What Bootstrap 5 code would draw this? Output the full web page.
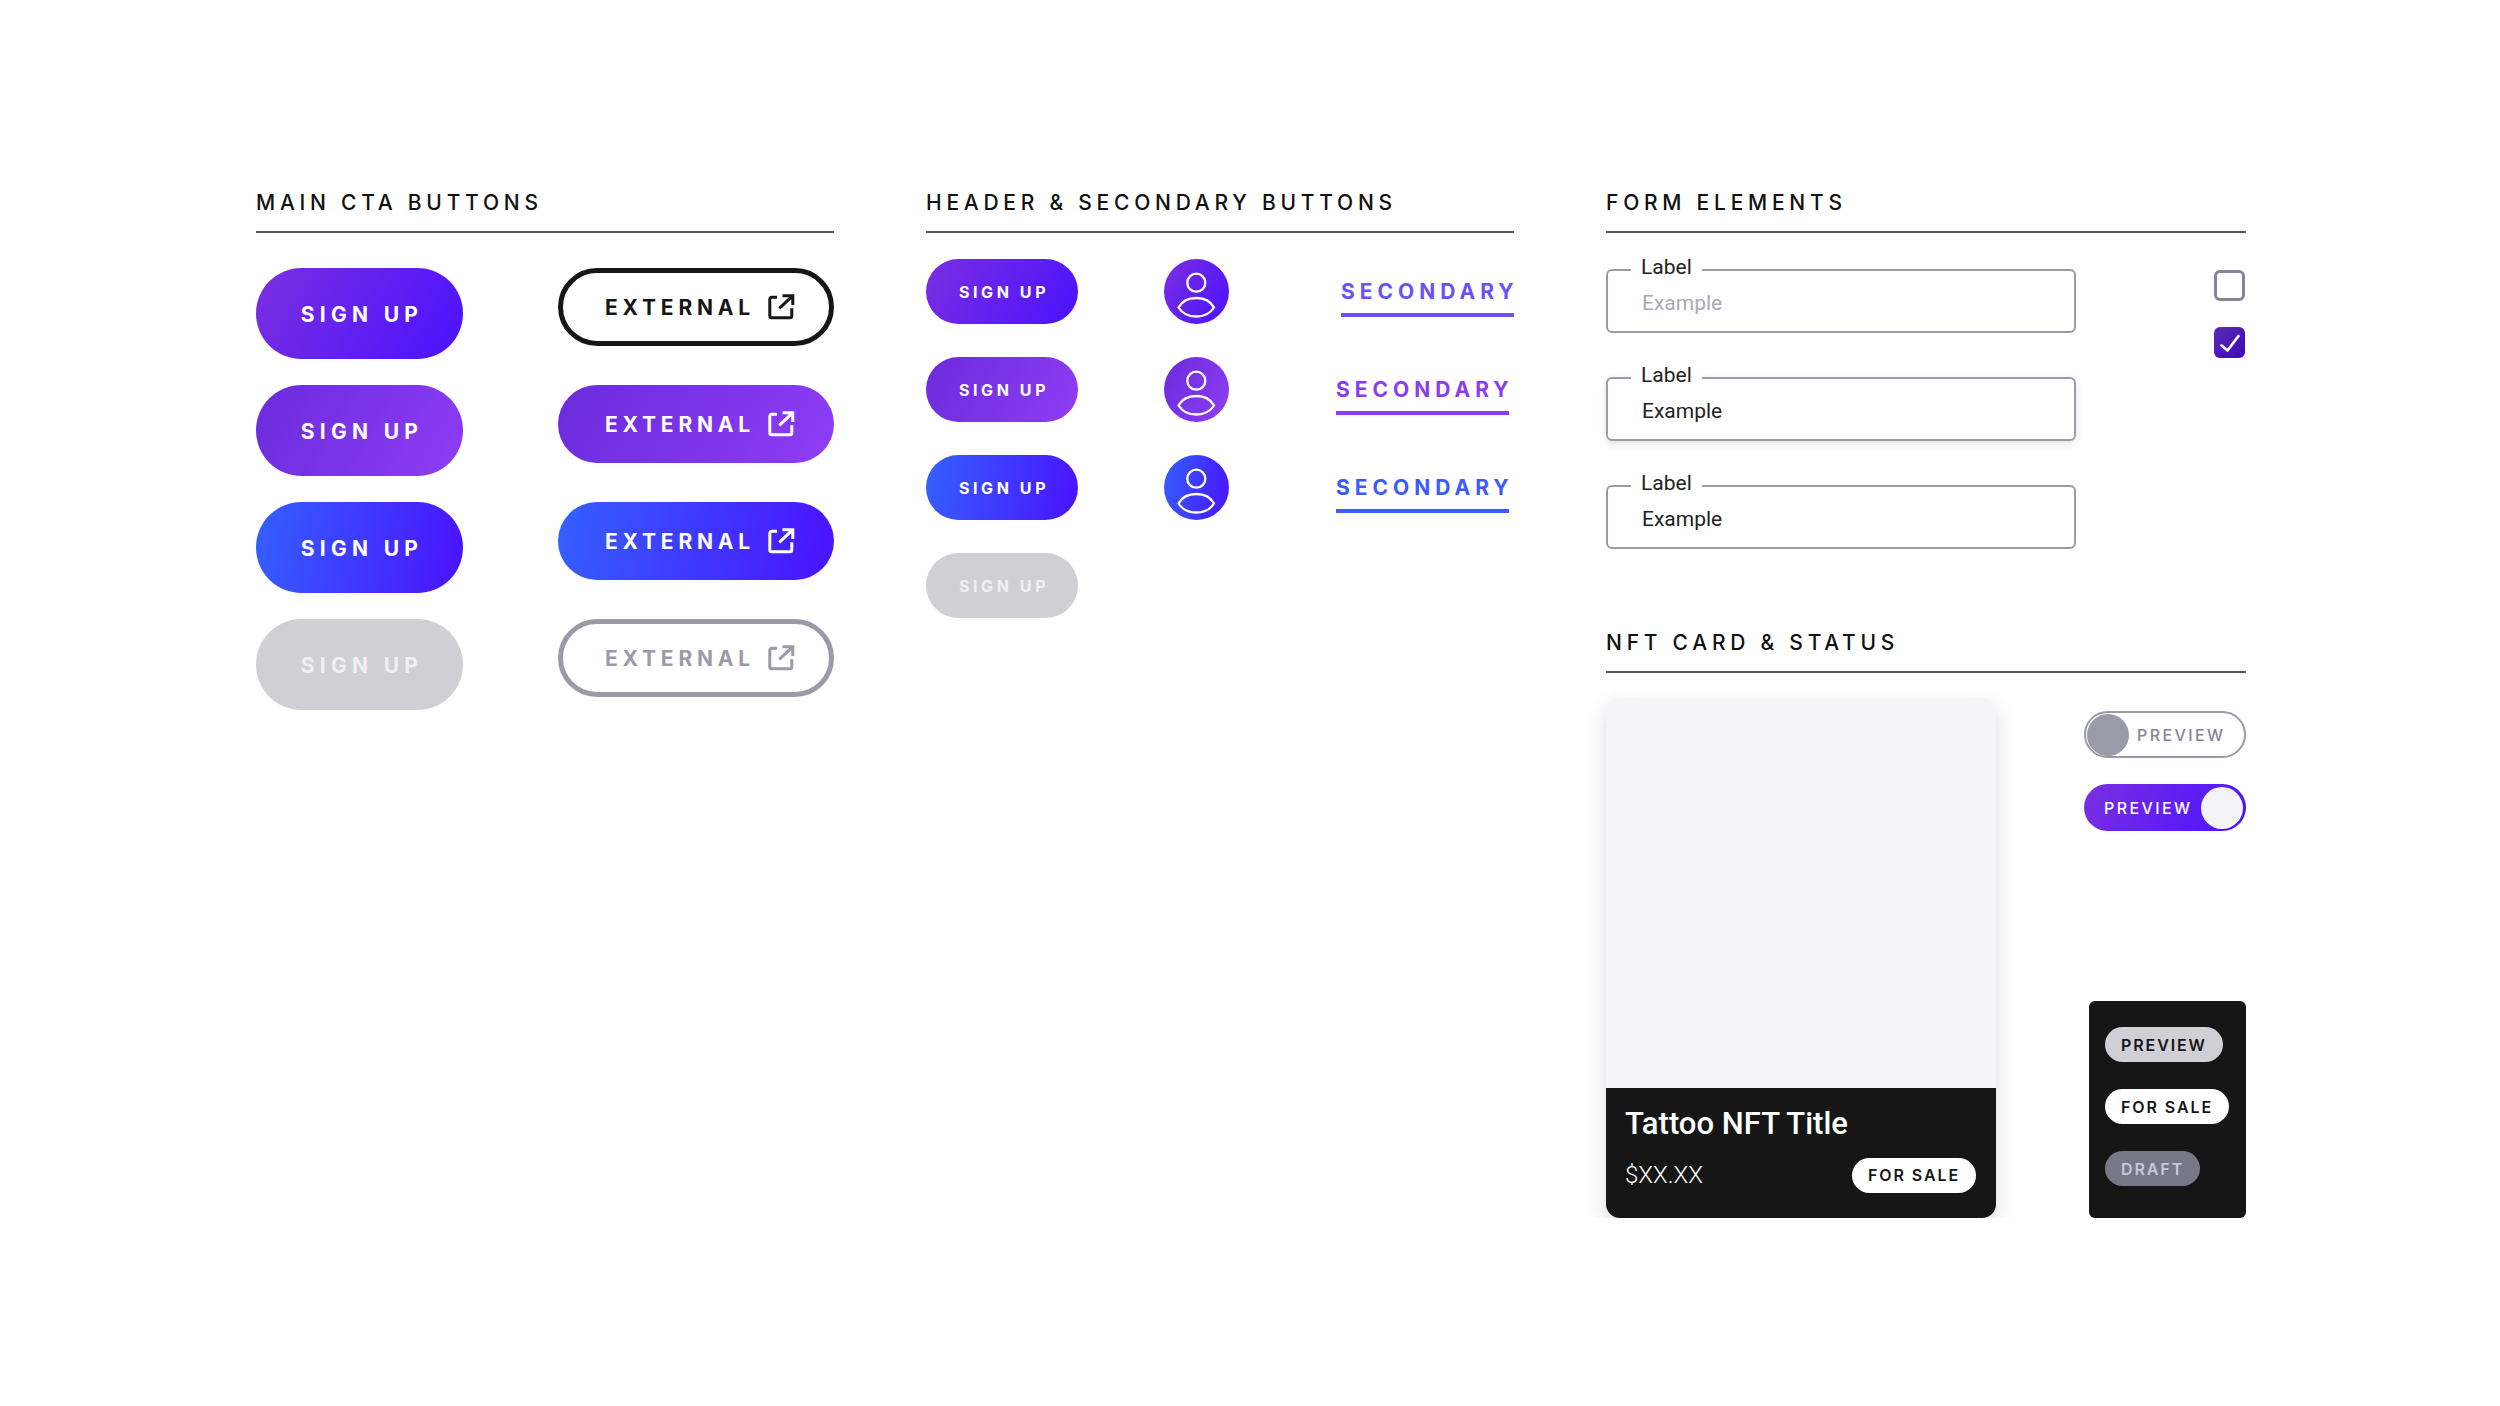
<!doctype html>
<html lang="en">
  <head>
    <meta charset="UTF-8" />
    <meta name="viewport" content="width=device-width, initial-scale=1.0" />
    <title>UI Kit</title>
    <link href="https://cdn.jsdelivr.net/npm/bootstrap@5.3.0/dist/css/bootstrap.min.css" rel="stylesheet" />
    <style>
      body {
        font-family: Inter, "Liberation Sans", sans-serif;
        background: #fff;
        color: #161616;
      }

      .kit-page {
        padding: 186px 254px 0 256px;
        gap: 92px;
      }

      .col-main { width: 578px; }
      .col-header { width: 588px; }
      .col-form { width: 640px; }

      .sec-head {
        font-family: Inter, sans-serif;
        font-size: 21px;
        font-weight: 500;
        line-height: 34px;
        letter-spacing: 4.75px;
        color: #111;
        margin: 0;
        padding-bottom: 11px;
        border-bottom: 2px solid #555;
      }

      /* gradients */
      .grad-a { background: linear-gradient(120deg, #7b2fe0 0%, #4a12ff 100%); }
      .grad-b { background: linear-gradient(120deg, #6a2bdc 0%, #8f3df5 100%); }
      .grad-c { background: linear-gradient(100deg, #3460ff 0%, #4a12ff 100%); }
      .grad-off { background: #d0cfd6; }

      /* main cta */
      .main-grid {
        display: grid;
        grid-template-columns: 207px 276px;
        justify-content: space-between;
        align-items: start;
        row-gap: 26px;
        margin-top: 35px;
      }

      .btn.cta-big,
      .btn.cta-ext,
      .btn.cta-small {
        color: #fff;
        border: 0;
        font-weight: 700;
        text-transform: uppercase;
        display: flex;
        align-items: center;
        justify-content: center;
      }

      .btn.cta-big {
        width: 207px;
        height: 91px;
        padding: 2px 0 0 5px;
        font-size: 21px;
        letter-spacing: 5.3px;
      }

      .btn.cta-ext {
        width: 276px;
        height: 78px;
        padding: 2px 0 0 47px;
        justify-content: flex-start;
        font-size: 21px;
        letter-spacing: 4.8px;
        gap: 13px;
      }

      .btn.cta-small {
        width: 152px;
        height: 65px;
        padding: 0 0 0 4px;
        font-size: 16px;
        letter-spacing: 3.6px;
      }

      .btn.cta-off { color: #f0f0f3; }

      .btn.cta-line {
        background: #fff;
        color: #161616;
        border: 5px solid #161616;
        padding-left: 42px;
      }

      .btn.cta-line-off {
        background: #fff;
        color: #9a9aa8;
        border: 5px solid #9a9aa8;
        padding-left: 42px;
      }

      .ext-icon { width: 27px; height: 26px; flex: none; margin-top: -3px; }

      /* header buttons */
      .head-grid {
        display: grid;
        grid-template-columns: 152px 65px 1fr;
        column-gap: 86px;
        row-gap: 33px;
        align-items: start;
        margin-top: 26px;
      }

      .avatar-dot { width: 65px; height: 65px; }
      .avatar-dot svg { display: block; width: 65px; height: 65px; }

      .sec-link {
        display: block;
        width: 173px;
        justify-self: end;
        margin-top: 20px;
        margin-right: 5px;
        padding-bottom: 8px;
        border-bottom: 4px solid currentColor;
        font-size: 21px;
        font-weight: 700;
        line-height: 26px;
        letter-spacing: 5px;
        white-space: nowrap;
        text-decoration: none;
      }

      .sec-link.sec-first { margin-right: 0; color: #6a50fa; border-color: #6a50fa; }
      .sec-link.sec-purple { color: #8a3df0; }
      .sec-link.sec-blue { color: #3b5bff; }

      /* form */
      .form-zone { margin-top: 36px; }
      .field-stack { width: 470px; gap: 44px; }

      .field-box { height: 64px; }

      .field-box .form-control {
        height: 64px;
        font-family: Roboto, sans-serif;
        font-size: 21px;
        color: #222;
        padding: 4px 34px 0;
        border: 2px solid #9a9aa8;
        border-radius: 6px;
      }

      .field-box .form-control::placeholder { color: #a9a9b6; }
      .field-box.field-raised .form-control { box-shadow: 0 3px 8px rgba(0, 0, 0, .12); }

      .field-label {
        position: absolute;
        top: -16px;
        left: 25px;
        padding: 0 10px;
        background: #fff;
        font-family: Roboto, sans-serif;
        font-size: 21px;
        line-height: 28px;
        color: #222;
      }

      .check-stack { gap: 26px; padding-top: 1px; margin-right: 1px; }

      .form-check-input.kit-check {
        width: 31px;
        height: 31px;
        margin: 0;
        float: none;
        border: 3px solid #85859a;
        border-radius: 6px;
        background-color: #fff;
      }

      .form-check-input.kit-check:checked {
        border: 0;
        background: url("data:image/svg+xml,%3csvg xmlns='http://www.w3.org/2000/svg' viewBox='0 0 31 31'%3e%3cpath fill='none' stroke='%23fff' stroke-width='2.7' stroke-linecap='round' stroke-linejoin='round' d='M7.500 18.500l6 5 11-14.500'/%3e%3c/svg%3e") center / 100% no-repeat,
          linear-gradient(135deg, #5f2bb5 0%, #3a09b8 100%);
      }

      /* nft */
      .nft-head { margin-top: 77px; }
      .nft-zone { margin-top: 25px; }

      .card.nft-card {
        width: 390px;
        height: 520px;
        border: 0;
        border-radius: 14px;
        overflow: hidden;
        box-shadow: 0 8px 22px rgba(0, 0, 0, .14);
      }

      .nft-art { height: 390px; background: #f5f5f7; }
      .nft-info { background: #161616; color: #fff; padding: 18px 20px 0 19px; }

      .nft-title {
        font-family: Roboto, sans-serif;
        font-size: 31px;
        font-weight: 500;
        line-height: 36px;
        margin: 0 0 15px;
      }

      .nft-price {
        font-family: Roboto, sans-serif;
        font-size: 24px;
        font-weight: 300;
      }

      .badge.kit-pill {
        height: 35px;
        padding: 0 16px;
        display: inline-flex;
        align-items: center;
        font-size: 16px;
        font-weight: 600;
        letter-spacing: 1.9px;
        color: #161616;
      }

      .pill-white { background: #fff; }
      .pill-grey { background: #d0cfd6; }
      .badge.kit-pill.pill-draft { background: #777788; color: #c9c9d2; }

      .status-col { width: 162px; padding-top: 13px; gap: 26px; }

      .kit-toggle {
        width: 162px;
        height: 47px;
        padding: 2px 3px;
        font-size: 16px;
        font-weight: 500;
        letter-spacing: 2.4px;
      }

      .toggle-off { border: 2px solid #9a9aa8; background: #fff; color: #85859a; padding: 0 1px; gap: 8px; }
      .toggle-on { color: #fff; justify-content: space-between; padding-left: 20px; }

      .toggle-knob { width: 42px; height: 42px; flex: none; }
      .toggle-off .toggle-knob { background: #9a9aa8; }
      .toggle-on .toggle-knob { background: #f4f4f7; }

      .status-panel {
        width: 157px;
        height: 217px;
        margin-top: auto;
        align-self: flex-end;
        background: #161616;
        border-radius: 6px;
        padding: 26px 0 0 16px;
        gap: 27px;
      }
    </style>
  </head>

  <body>
    <svg width="0" height="0" class="position-absolute">
      <symbol id="ext-sym" viewBox="0 0 27 26">
        <path d="M9 3.200H3.800a2 2 0 0 0-2 2v16.600a2 2 0 0 0 2 2h18a2 2 0 0 0 2-2v-7.500" fill="none" stroke="currentColor" stroke-width="3" />
        <path d="M11.300 14.300 23.500 2.800M14.500 1.800H24.800V11" fill="none" stroke="currentColor" stroke-width="3" />
      </symbol>
      <symbol id="user-sym" viewBox="0 0 65 65">
        <circle cx="32.300" cy="23.700" r="9" fill="none" stroke="#fff" stroke-width="2.300" />
        <path d="M14.500 48.500C18 42 24 39 32.300 39S46.500 42 50 48.500C46.500 54 40 57.500 32.300 57.500S18 54 14.500 48.500Z" fill="none" stroke="#fff" stroke-width="2.300" stroke-linejoin="round" />
      </symbol>
    </svg>

    <div class="kit-page d-flex align-items-start">
      <!-- Main CTA -->
      <section class="col-main">
        <h2 class="sec-head">MAIN CTA BUTTONS</h2>
        <div class="main-grid">
          <button class="btn rounded-pill cta-big grad-a">Sign up</button>
          <button class="btn rounded-pill cta-ext cta-line">External <svg class="ext-icon"><use href="#ext-sym" /></svg></button>
          <button class="btn rounded-pill cta-big grad-b">Sign up</button>
          <button class="btn rounded-pill cta-ext grad-b">External <svg class="ext-icon"><use href="#ext-sym" /></svg></button>
          <button class="btn rounded-pill cta-big grad-c">Sign up</button>
          <button class="btn rounded-pill cta-ext grad-c">External <svg class="ext-icon"><use href="#ext-sym" /></svg></button>
          <button class="btn rounded-pill cta-big cta-off grad-off">Sign up</button>
          <button class="btn rounded-pill cta-ext cta-line-off">External <svg class="ext-icon"><use href="#ext-sym" /></svg></button>
        </div>
      </section>

      <!-- Header and secondary -->
      <section class="col-header">
        <h2 class="sec-head">HEADER &amp; SECONDARY BUTTONS</h2>
        <div class="head-grid">
          <button class="btn rounded-pill cta-small grad-a">Sign up</button>
          <div class="avatar-dot rounded-circle grad-a"><svg><use href="#user-sym" /></svg></div>
          <a class="sec-link sec-first" href="#">SECONDARY</a>

          <button class="btn rounded-pill cta-small grad-b">Sign up</button>
          <div class="avatar-dot rounded-circle grad-b"><svg><use href="#user-sym" /></svg></div>
          <a class="sec-link sec-purple" href="#">SECONDARY</a>

          <button class="btn rounded-pill cta-small grad-c">Sign up</button>
          <div class="avatar-dot rounded-circle grad-c"><svg><use href="#user-sym" /></svg></div>
          <a class="sec-link sec-blue" href="#">SECONDARY</a>

          <button class="btn rounded-pill cta-small cta-off grad-off">Sign up</button>
        </div>
      </section>

      <!-- Form and NFT -->
      <section class="col-form">
        <h2 class="sec-head">FORM ELEMENTS</h2>
        <div class="form-zone d-flex justify-content-between align-items-start">
          <div class="field-stack d-flex flex-column">
            <div class="field-box position-relative">
              <span class="field-label">Label</span>
              <input class="form-control" type="text" placeholder="Example" />
            </div>
            <div class="field-box field-raised position-relative">
              <span class="field-label">Label</span>
              <input class="form-control" type="text" value="Example" />
            </div>
            <div class="field-box position-relative">
              <span class="field-label">Label</span>
              <input class="form-control" type="text" value="Example" />
            </div>
          </div>
          <div class="check-stack d-flex flex-column">
            <input class="form-check-input kit-check" type="checkbox" />
            <input class="form-check-input kit-check" type="checkbox" checked />
          </div>
        </div>

        <h2 class="sec-head nft-head">NFT CARD &amp; STATUS</h2>
        <div class="nft-zone d-flex justify-content-between">
          <div class="card nft-card">
            <div class="nft-art"></div>
            <div class="nft-info flex-grow-1">
              <h3 class="nft-title">Tattoo NFT Title</h3>
              <div class="d-flex justify-content-between align-items-center">
                <span class="nft-price">$XX.XX</span>
                <span class="badge rounded-pill kit-pill pill-white">FOR SALE</span>
              </div>
            </div>
          </div>
          <div class="status-col d-flex flex-column">
            <div class="kit-toggle toggle-off rounded-pill d-flex align-items-center">
              <span class="toggle-knob rounded-circle"></span>
              <span>PREVIEW</span>
            </div>
            <div class="kit-toggle toggle-on grad-a rounded-pill d-flex align-items-center">
              <span>PREVIEW</span>
              <span class="toggle-knob rounded-circle"></span>
            </div>
            <div class="status-panel d-flex flex-column align-items-start">
              <span class="badge rounded-pill kit-pill pill-grey">PREVIEW</span>
              <span class="badge rounded-pill kit-pill pill-white">FOR SALE</span>
              <span class="badge rounded-pill kit-pill pill-draft">DRAFT</span>
            </div>
          </div>
        </div>
      </section>
    </div>

    <script src="https://cdn.jsdelivr.net/npm/bootstrap@5.3.0/dist/js/bootstrap.bundle.min.js"></script>
  </body>
</html>
